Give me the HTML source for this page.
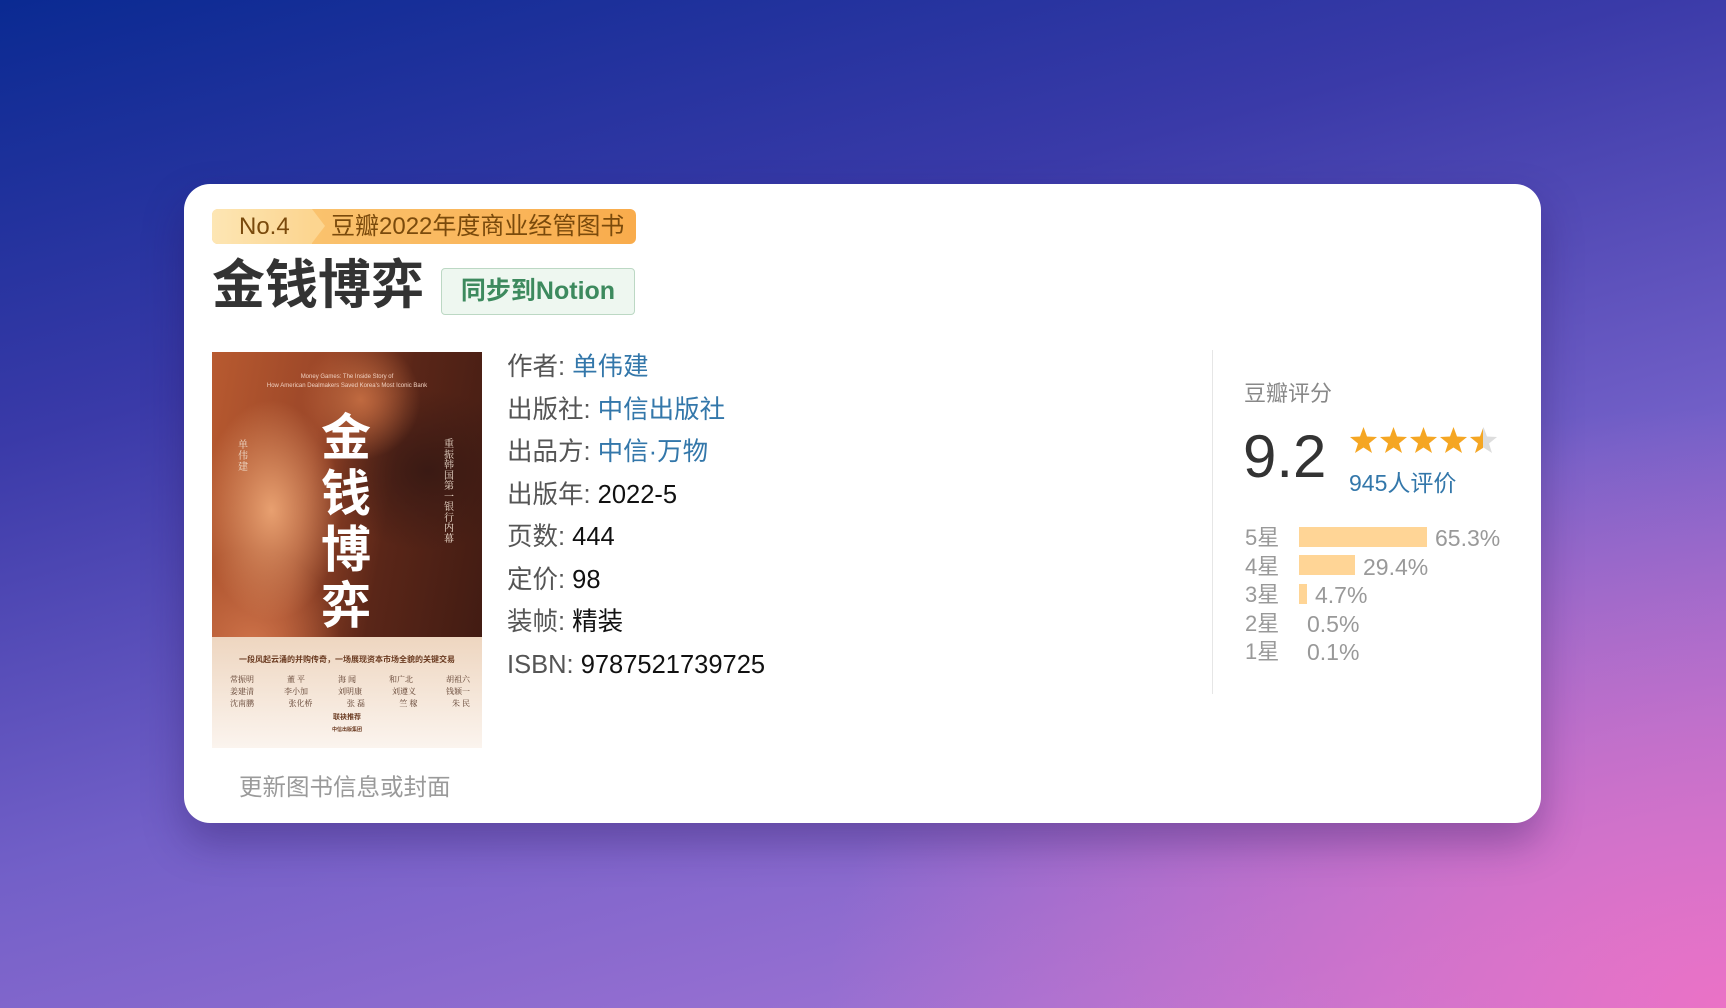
<!DOCTYPE html>
<html><head><meta charset="utf-8"><style>
*{margin:0;padding:0;box-sizing:border-box}
body{width:1726px;height:1008px;overflow:hidden;position:relative;font-family:"Liberation Sans","Noto Sans CJK SC",sans-serif;
background:radial-gradient(ellipse 900px 600px at 100% 100%,#ea72c6 0%,rgba(234,114,198,0) 100%),linear-gradient(165deg,#0a2a92 0%,#3a3aa8 30%,#7360c8 60%,#b07ad8 100%);}
.card{position:absolute;left:184px;top:184px;width:1357px;height:639px;background:#fff;border-radius:26px;box-shadow:0 20px 40px rgba(40,20,90,.35)}
.badge{position:absolute;left:28px;top:25px;height:35px;width:424px;border-radius:6px;overflow:hidden;background:linear-gradient(90deg,#fbc978,#f9ac4c)}
.badge .l{position:absolute;left:0;top:0;height:35px;width:100px;background:linear-gradient(90deg,#fde6b4,#fcd590)}
.badge .arr{position:absolute;left:100px;top:0;width:0;height:0;border-top:17.5px solid transparent;border-bottom:17.5px solid transparent;border-left:13px solid #fcd590}
.badge span{position:absolute;top:0;line-height:35px;font-size:24px;color:#7a4a0c}
.title{position:absolute;left:28px;top:72px;font-size:53px;font-weight:bold;color:#333;line-height:60px;letter-spacing:0}
.btn{position:absolute;left:257px;top:84px;width:194px;height:47px;border:1.5px solid #bcd8c4;background:#eef7f0;border-radius:4px;color:#3d8a5e;font-size:25px;font-weight:bold;text-align:center;line-height:44px}
.cover{position:absolute;left:28px;top:168px;width:270px;height:396px;overflow:hidden;
background:radial-gradient(ellipse 70px 110px at 22% 40%,#e8a070,transparent),radial-gradient(ellipse 90px 100px at 15% 75%,#d0744a,transparent),radial-gradient(ellipse 60px 60px at 55% 12%,#c06a40,transparent),radial-gradient(ellipse 100px 80px at 80% 30%,#3a1a14,transparent),linear-gradient(100deg,#b85a30 0%,#9a4628 35%,#5a2618 60%,#3e1a12 100%)}
.cover .bot{position:absolute;left:0;top:285px;width:270px;height:111px;background:linear-gradient(180deg,#eed6c0,#fbf4ee)}
.cover .big{position:absolute;left:108px;top:58px;width:52px;color:#fff;font-size:50px;font-weight:bold;line-height:56px;text-align:center}
.cover .sm{position:absolute;color:#f0d0c0;font-size:6px;width:270px;text-align:center}
.cover .v{position:absolute;color:#f0e0d0;font-size:11px;width:12px;line-height:12px;font-family:"Noto Serif CJK SC",serif}
.cover .t{position:absolute;left:0;width:270px;text-align:center;color:#6a3a20;font-size:8px;font-weight:bold}
.cover .n{position:absolute;left:18px;width:240px;color:#5a3a2a;font-size:8px;line-height:12px;display:flex;justify-content:space-between;font-family:"Noto Serif CJK SC",serif}
.info{position:absolute;left:323px;top:162px;font-size:25.5px;line-height:42.5px;color:#555}
.info b{font-weight:normal;color:#111}.info a{color:#3377aa;text-decoration:none}
.upd{position:absolute;left:55px;top:588px;font-size:23.5px;color:#9a9a9a;line-height:30px}
.div{position:absolute;left:1028px;top:166px;width:1px;height:344px;background:#e6e6e6}
.r{position:absolute;color:#999}
.bar{position:absolute;height:20px;background:#ffd596}
</style></head><body>
<div class="card">
 <div class="badge"><div class="l"></div><div class="arr"></div><span style="left:27px">No.4</span><span style="left:119px">豆瓣2022年度商业经管图书</span></div>
 <div class="title">金钱博弈</div>
 <div class="btn">同步到Notion</div>
 <div class="cover">
  <div class="sm" style="top:22px">Money Games: The Inside Story of</div>
  <div class="sm" style="top:31px">How American Dealmakers Saved Korea's Most Iconic Bank</div>
  <div class="big">金钱博弈</div>
  <div class="v" style="left:26px;top:86px;font-size:10px;line-height:11px">单伟建</div>
  <div class="v" style="left:232px;top:86px;font-size:10px;line-height:10.5px">重振韩国第一银行内幕</div>
  <div class="bot"></div>
  <div class="t" style="top:302px">一段风起云涌的并购传奇，一场展现资本市场全貌的关键交易</div>
  <div class="n" style="top:322px"><span>常振明</span><span>董 平</span><span>海 闻</span><span>和广北</span><span>胡祖六</span></div>
  <div class="n" style="top:334px"><span>姜建清</span><span>李小加</span><span>刘明康</span><span>刘遵义</span><span>钱颖一</span></div>
  <div class="n" style="top:346px"><span>沈南鹏</span><span>张化桥</span><span>张 磊</span><span>竺 稼</span><span>朱 民</span></div>
  <div class="t" style="top:360px;font-size:7px">联袂推荐</div>
  <div class="t" style="top:374px;font-size:5px">中信出版集团</div>
 </div>
 <div class="info">
  作者: <a>单伟建</a><br>出版社: <a>中信出版社</a><br>出品方: <a>中信·万物</a><br>出版年: <b>2022-5</b><br>页数: <b>444</b><br>定价: <b>98</b><br>装帧: <b>精装</b><br>ISBN: <b>9787521739725</b>
 </div>
 <div class="upd">更新图书信息或封面</div>
 <div class="div"></div>
 <div class="r" style="left:1060px;top:192px;font-size:22px;color:#888">豆瓣评分</div>
 <div class="r" style="left:1059px;top:238px;font-size:60px;color:#333;line-height:70px">9.2</div>
 <svg style="position:absolute;left:1165px;top:242px" width="150" height="30" viewBox="0 0 150 30">
  <defs><polygon id="s" points="14.5,1 18,10.5 28,11 20,17.5 23,27 14.5,21.5 6,27 9,17.5 1,11 11,10.5"/>
  <clipPath id="h"><rect x="0" y="0" width="14" height="30"/></clipPath></defs>
  <use href="#s" fill="#f5a623"/><use href="#s" x="30" fill="#f5a623"/><use href="#s" x="60" fill="#f5a623"/><use href="#s" x="90" fill="#f5a623"/>
  <use href="#s" x="120" fill="#ddd"/><g transform="translate(120,0)"><use href="#s" fill="#f5a623" clip-path="url(#h)"/></g>
 </svg>
 <div class="r" style="left:1165px;top:280px;font-size:23px;color:#3377aa">945人评价</div>
 <div class="r" style="left:1061px;top:340px;font-size:22px;line-height:28.5px">5星<br>4星<br>3星<br>2星<br>1星</div>
 <div class="bar" style="left:1115px;top:343px;width:128px"></div>
 <div class="bar" style="left:1115px;top:371px;width:56px"></div>
 <div class="bar" style="left:1115px;top:400px;width:8px"></div>
 <div class="r" style="left:1251px;top:340px;font-size:23px;line-height:28.5px">65.3%</div>
 <div class="r" style="left:1179px;top:368.5px;font-size:23px;line-height:28.5px">29.4%</div>
 <div class="r" style="left:1131px;top:397px;font-size:23px;line-height:28.5px">4.7%</div>
 <div class="r" style="left:1123px;top:425.5px;font-size:23px;line-height:28.5px">0.5%<br>0.1%</div>
</div>
</body></html>
